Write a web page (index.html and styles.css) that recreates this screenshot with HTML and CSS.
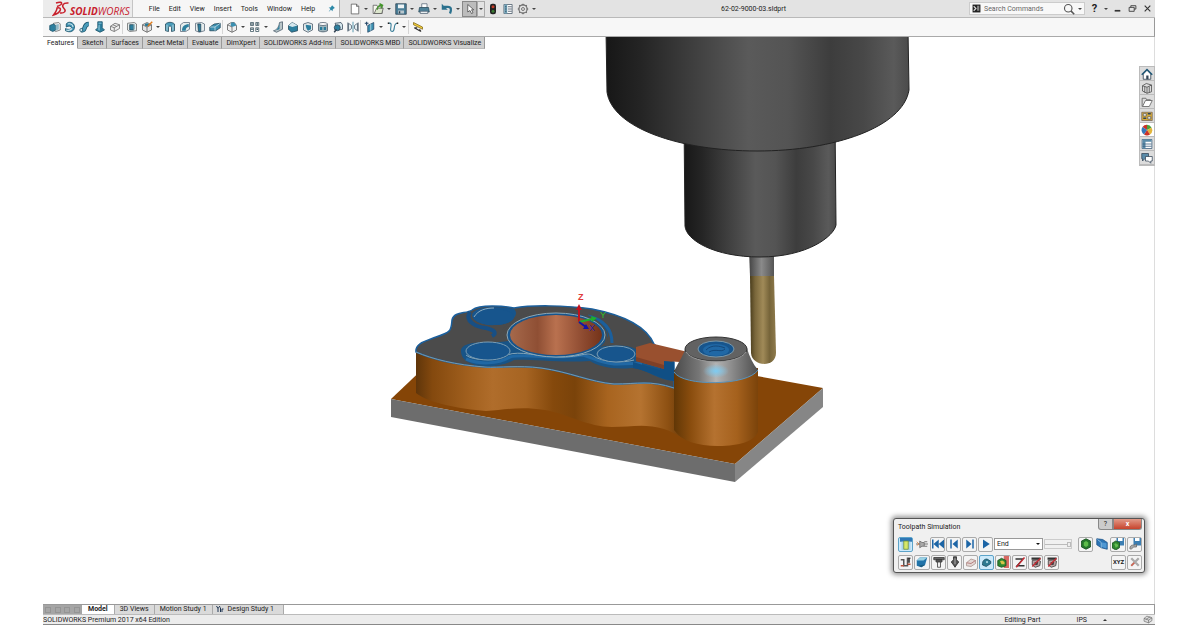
FILE: index.html
```html
<!DOCTYPE html>
<html lang="en">
<head>
  <meta charset="UTF-8">
  <meta name="viewport" content="width=device-width, initial-scale=1.0">
  <title>62-02-9000-03.sldprt</title>
  <link rel="stylesheet" href="styles.css">
</head>
<body>

  <!-- Icon set -->
  <svg class="sprites" aria-hidden="true">
    <symbol id="i-extrude" viewBox="0 0 16 16"><path d="M6 3l7-1 2 2v8l-6 2-3-2z" fill="#eee" stroke="#666"/><path d="M1 6l5-2 3 2v6l-4 2-4-2z" fill="#2d7f9e" stroke="#174f66"/><path d="M9 5l4-1v7l-4 2z" fill="#8fb9c7"/></symbol>
    <symbol id="i-revolve" viewBox="0 0 16 16"><path d="M3 4c2-4 11-3 11 4 0 6-6 8-12 5v-3c4 2 8 1 8-1S6 6 3 8z" fill="#3b8fb0" stroke="#174f66"/><path d="M5 4c4-1 7 1 7 4M3 12c3 1 6 0 8-2" fill="none" stroke="#cfe7ee" stroke-width="1.5"/></symbol>
    <symbol id="i-sweep" viewBox="0 0 16 16"><path d="M3 12c7 2 2-8 10-8" fill="none" stroke="#174f66" stroke-width="6"/><path d="M3 12c7 2 2-8 10-8" fill="none" stroke="#4a9cba" stroke-width="4"/><circle cx="3" cy="12" r="2" fill="#d7edf3" stroke="#174f66"/></symbol>
    <symbol id="i-loft" viewBox="0 0 16 16"><path d="M5 1h6v8l3 3-6 3-6-3 3-3z" fill="#2d7f9e" stroke="#174f66"/><path d="M6 2h4v2H6zM6 5h2v8l-3-1z" fill="#69adc5"/></symbol>
    <symbol id="i-boundary" viewBox="0 0 16 16"><path d="M2 7l6-4 6 2v5l-7 4-5-2z" fill="#eee" stroke="#666"/><path d="M2 7l5 2 7-4M7 9v5M5 5l5 2" fill="none" stroke="#666"/></symbol>
    <symbol id="i-cut" viewBox="0 0 16 16"><path d="M2 3l9-1 3 2v9l-9 1-3-2z" fill="#e7eeee" stroke="#666"/><rect x="5" y="5" width="5" height="7" fill="#2d7f9e" stroke="#245"/><path d="M10 5l2-1v7l-2 1" fill="#91bac5"/></symbol>
    <symbol id="i-hole" viewBox="0 0 16 16"><path d="M2 5l6-3 6 3v7l-6 3-6-3z" fill="#e5e5e5" stroke="#555"/><path d="M2 5l6 3 6-3M8 8v7" fill="none" stroke="#555"/><ellipse cx="8" cy="5" rx="3" ry="2" fill="#277b9a"/><path d="M15 1L9 7" stroke="#e07b19" stroke-width="2"/></symbol>
    <symbol id="i-revcut" viewBox="0 0 16 16"><path d="M2 4c3-3 9-3 12 0v9l-4 1V9c0-3-4-3-4 0v5l-4-1z" fill="#4a9cba" stroke="#245"/><path d="M4 5v8M12 5v8" stroke="#d5e9ee"/></symbol>
    <symbol id="i-sweptcut" viewBox="0 0 16 16"><path d="M2 5l4-3h8v9l-5 3H2z" fill="#e6eded" stroke="#567"/><path d="M4 13c0-6 3-8 9-9v4c-3 0-4 2-4 5z" fill="#2d7f9e"/></symbol>
    <symbol id="i-loftcut" viewBox="0 0 16 16"><path d="M2 3l8-1 4 2v9l-7 2-5-2z" fill="#e6eded" stroke="#567"/><path d="M5 4h4v10H6z" fill="#2d7f9e" stroke="#245"/></symbol>
    <symbol id="i-boundcut" viewBox="0 0 16 16"><path d="M1 8l6-4 8-1v6l-6 4H1z" fill="#3b8fb0" stroke="#245"/><path d="M1 8h7l7-5M8 8v5" fill="none" stroke="#cde3ea"/></symbol>
    <symbol id="i-fillet" viewBox="0 0 16 16"><path d="M2 5l5-3h4l3 4v6l-6 3-6-3z" fill="#f0f0f0" stroke="#555"/><path d="M7 2h4l3 4-6 2-2-2z" fill="#3b8fb0"/><path d="M2 5l6 3v7" fill="none" stroke="#555"/></symbol>
    <symbol id="i-pattern" viewBox="0 0 16 16"><g fill="#fff" stroke="#35505c"><path d="M2 2h4v4H2zM9 2h4v4H9zM2 9h4v5H2zM9 9h4v5H9z"/></g><path d="M3 4h2M10 4h2M3 11h2M10 11h2" stroke="#35505c" stroke-width="2"/></symbol>
    <symbol id="i-rib" viewBox="0 0 16 16"><path d="M10 2l4-1v10l-8 4-4-2c4-1 7-4 8-11z" fill="#b9c5c8" stroke="#456"/><path d="M10 3v8l-7 2c4-1 6-4 7-10z" fill="#2d7f9e"/></symbol>
    <symbol id="i-draft" viewBox="0 0 16 16"><path d="M2 6l5-4 7 4v7l-8 2-4-4z" fill="#2d7f9e" stroke="#245"/><path d="M2 6l5-4 7 4-7 2z" fill="#d6e7ed"/></symbol>
    <symbol id="i-shell" viewBox="0 0 16 16"><path d="M2 4l6-2 6 2v8l-6 3-6-3z" fill="#e2e8ea" stroke="#456"/><path d="M5 5l7 1v5l-4 2c-2-2-3-5-3-8z" fill="#2d7f9e"/></symbol>
    <symbol id="i-wrap" viewBox="0 0 16 16"><path d="M2 4v9c3 2 9 2 12 0V4z" fill="#9fb4bb" stroke="#456"/><ellipse cx="8" cy="4" rx="6" ry="2" fill="#fff" stroke="#456"/><path d="M4 8h3v4H4zM9 8h3v4H9z" fill="#277b9a"/></symbol>
    <symbol id="i-intersect" viewBox="0 0 16 16"><path d="M4 3l8-1 2 3v6l-6 1z" fill="#d6e7ed" stroke="#345"/><circle cx="7" cy="9" r="4" fill="#2d7f9e" stroke="#345"/><path d="M3 15l3-4" stroke="#345" stroke-width="2"/></symbol>
    <symbol id="i-mirror" viewBox="0 0 16 16"><path d="M2 3l4 3v4l-4 3zM14 3l-4 3v4l4 3z" fill="#e4eef1" stroke="#456"/><path d="M8 1v14" stroke="#277b9a"/><path d="M1 2v12M15 2v12" stroke="#456"/></symbol>
    <symbol id="i-refgeo" viewBox="0 0 16 16"><path d="M5 6l8-4v9l-8 4z" fill="#3b8fb0" stroke="#246"/><path d="M9 4v9" stroke="#c8e3eb"/><path d="M1 3h5M3.500 1v5" stroke="#246" stroke-width="1.500"/></symbol>
    <symbol id="i-curve" viewBox="0 0 16 16"><path d="M2 3c8-2-1 11 5 11 5 0 0-11 7-11" fill="none" stroke="#3b7f99" stroke-width="1.500"/><path d="M1 3h2M13 3h2" stroke="#222" stroke-width="2"/></symbol>
    <symbol id="i-instant" viewBox="0 0 16 16"><path d="M2 2l12 6v3L2 5z" fill="#f2ce3b" stroke="#806615"/><path d="M3 9l9 5M3 9h4M12 14l-2-3" fill="none" stroke="#333" stroke-width="1.500"/></symbol>

    <symbol id="i-new" viewBox="0 0 16 16"><path d="M3 1.500h7l3 3v10H3z" fill="#fff" stroke="#555"/><path d="M10 1.500v3h3" fill="none" stroke="#555"/></symbol>
    <symbol id="i-open" viewBox="0 0 16 16"><path d="M1.500 14V3h5l1 2h6v9z" fill="#f7f7ef" stroke="#555"/><path d="M3 14l3-7h9l-2 7z" fill="#dce6cd" stroke="#555"/><path d="M7 9c0-4 3-6 6-6M10 1l4 2-2 4" fill="none" stroke="#45952c" stroke-width="2"/></symbol>
    <symbol id="i-save" viewBox="0 0 16 16"><path d="M1 1h14v14H1z" fill="#4a7f98" stroke="#283e4e"/><path d="M4 2h8v5H4z" fill="#edf3f5"/><path d="M4 10h8v4H4z" fill="#b9c7ce"/><path d="M5 11h2v3H5z" fill="#283e4e"/></symbol>
    <symbol id="i-print" viewBox="0 0 16 16"><path d="M5 1h7v6H5z" fill="#fff" stroke="#567"/><path d="M2 6h12l1 6H1z" fill="#4d8198" stroke="#27485a"/><path d="M3 11h10v3H3z" fill="#e8eef0" stroke="#567"/></symbol>
    <symbol id="i-undo" viewBox="0 0 16 16"><path d="M4 5h5c5 0 5 4 3 9" fill="none" stroke="#2b718e" stroke-width="3"/><path d="M1 1v8h8z" fill="#2b718e"/></symbol>
    <symbol id="i-select" viewBox="0 0 16 16"><path d="M5 2v10l3-2 2 4 2-1-2-4h3z" fill="#fff" stroke="#444"/></symbol>
    <symbol id="i-light" viewBox="0 0 16 16"><rect x="4" y="1" width="8" height="14" rx="3" fill="#222"/><circle cx="8" cy="5" r="2" fill="#c33b28"/><circle cx="8" cy="11" r="2" fill="#3b7b34"/></symbol>
    <symbol id="i-list" viewBox="0 0 16 16"><path d="M2.500 2h11v12h-11z" fill="#fff" stroke="#456"/><path d="M3 2h4v12H3z" fill="#6ea1b6"/><path d="M8 5h5M8 8h5M8 11h5M4 5h2M4 8h2M4 11h2" stroke="#345"/></symbol>
    <symbol id="i-gear" viewBox="0 0 16 16"><circle cx="8" cy="8" r="5.500" fill="none" stroke="#666" stroke-width="1.500"/><circle cx="8" cy="8" r="2" fill="none" stroke="#555"/><path d="M8 1v2M8 13v2M1 8h2M13 8h2M3 3l1 1M12 12l1 1M3 13l1-1M12 4l1-1" stroke="#666" stroke-width="1.500"/></symbol>
    <symbol id="i-pin" viewBox="0 0 16 16"><path d="M9 2l5 5-2 1-2 2v3l-3-3-4 4 3-5-3-3h3l2-2z" fill="#2d89a8"/></symbol>
    <symbol id="i-command" viewBox="0 0 16 16"><path d="M1 1h14v14H1z" fill="#222"/><path d="M3 4l4 4-4 4" fill="none" stroke="#ddd" stroke-width="2"/><path d="M9 3h4v9H9z" fill="#888"/></symbol>
    <symbol id="i-search" viewBox="0 0 16 16"><circle cx="7" cy="7" r="5" fill="none" stroke="#555" stroke-width="1.500"/><path d="M10.500 10.500L15 15" stroke="#555" stroke-width="2"/></symbol>
    <symbol id="i-min" viewBox="0 0 16 16"><path d="M3 12h10" stroke="#333" stroke-width="3"/></symbol>
    <symbol id="i-restore" viewBox="0 0 16 16"><path d="M5 6V3h9v6h-3M2 6h9v7H2z" fill="none" stroke="#333" stroke-width="1.500"/></symbol>
    <symbol id="i-close" viewBox="0 0 16 16"><path d="M3 3l10 10M13 3L3 13" stroke="#333" stroke-width="2"/></symbol>

    <symbol id="i-home" viewBox="0 0 16 16"><path d="M3 8v7h10V8L8 3z" fill="#fff" stroke="#234"/><path d="M1 9l7-7 7 7" fill="none" stroke="#1c5575" stroke-width="2"/><path d="M7 10h3v5H7z" fill="#345"/></symbol>
    <symbol id="i-library" viewBox="0 0 16 16"><path d="M2 5l5-3 7 2v9l-6 2-6-3z" fill="#ddd" stroke="#444"/><path d="M2 5l6 2 6-3M8 7v8M5 6v8M11 6v8" fill="none" stroke="#444"/></symbol>
    <symbol id="i-folder" viewBox="0 0 16 16"><path d="M1.500 14V3h5l1 2h5v2" fill="#ddd" stroke="#555"/><path d="M2 14l4-8h9l-4 8z" fill="#fff" stroke="#555"/></symbol>
    <symbol id="i-palette" viewBox="0 0 16 16"><path d="M1 3h14v11H1z" fill="#d7aa38" stroke="#765"/><path d="M3 5h4v3H3zM9 9h4v3H9z" fill="#fff" stroke="#555"/><path d="M9 5h4M3 11h4" stroke="#345" stroke-width="2"/></symbol>
    <symbol id="i-ball" viewBox="0 0 16 16"><circle cx="8" cy="8" r="7" fill="#eee"/><path d="M8 8V1a7 7 0 0 1 6 4z" fill="#4aa53b"/><path d="M8 8L2 4a7 7 0 0 1 6-3z" fill="#cc3327"/><path d="M8 8l6-3a7 7 0 0 1-2 9z" fill="#e4b63a"/><path d="M8 8l4 6a7 7 0 0 1-8 0z" fill="#cc3327"/><path d="M8 8l-4 6a7 7 0 0 1-2-10z" fill="#3677b9"/></symbol>
    <symbol id="i-props" viewBox="0 0 16 16"><path d="M1.500 2h13v12h-13z" fill="#fff" stroke="#357"/><path d="M2 2h12v3H2zM2 5h4v9H2z" fill="#5b8ca9"/><path d="M2 8h12M2 11h12" stroke="#357"/></symbol>
    <symbol id="i-forum" viewBox="0 0 16 16"><path d="M1 2h9v7H5l-3 3V9H1z" fill="#5b8ca9" stroke="#345"/><path d="M6 6h9v6h-2v3l-3-3H6z" fill="#fff" stroke="#345"/></symbol>

    <symbol id="i-toolview" viewBox="0 0 16 16"><path d="M0 0h16v5H0z" fill="#2f78b6"/><path d="M2 5h12v11H2z" fill="#a5d3ef"/><path d="M5 4h6v11H5z" fill="#d6e86a" stroke="#698b37"/></symbol>
    <symbol id="i-toolarm" viewBox="0 0 16 16"><path d="M0 8h16M11 5h4M11 11h4" stroke="#777" stroke-width="1.500"/><path d="M5 4l3 2h3v5H8l-3 2z" fill="#aaa" stroke="#666"/><path d="M1 5l3 3-3 2" fill="none" stroke="#d37b3b"/></symbol>
    <symbol id="i-first" viewBox="0 0 16 16"><path d="M0 2h2v12H0zM9 2v12L2 8zM16 2v12L9 8z" fill="#1c65a6"/></symbol>
    <symbol id="i-prev" viewBox="0 0 16 16"><path d="M3 2h2v12H3zM13 2v12L6 8z" fill="#1c65a6"/></symbol>
    <symbol id="i-next" viewBox="0 0 16 16"><path d="M11 2h2v12h-2zM3 2l7 6-7 6z" fill="#1c65a6"/></symbol>
    <symbol id="i-play" viewBox="0 0 16 16"><path d="M4 2l9 6-9 6z" fill="#1c65a6"/></symbol>
    <symbol id="i-green" viewBox="0 0 16 16"><path d="M2 4l6-3 6 3v8l-6 3-6-3z" fill="#24772b" stroke="#124a18"/><path d="M5 6l3-2 3 2v4l-3 2-3-2z" fill="#5dbd4a"/></symbol>
    <symbol id="i-bluebox" viewBox="0 0 16 16"><path d="M1 1l8 1 6 4v9l-8-2-6-4z" fill="#2b75b5" stroke="#184f85"/><path d="M2 2l5 4v7" fill="none" stroke="#a8d2ef"/><path d="M8 6l6 1v7l-6-2z" fill="#4f98d3"/></symbol>
    <symbol id="i-greensave" viewBox="0 0 16 16"><path d="M6 0h10v10H6z" fill="#3c7eb2"/><path d="M8 0h6v4H8z" fill="#fff"/><path d="M0 7l5-3 5 2v7l-5 3-5-3z" fill="#2f8731" stroke="#174d1a"/><path d="M3 8l2-1 3 2v2l-3 2z" fill="#65bd50"/></symbol>
    <symbol id="i-partsave" viewBox="0 0 16 16"><path d="M6 0h10v10H6z" fill="#3c7eb2"/><path d="M8 0h6v4H8z" fill="#fff"/><path d="M1 14c1-7 6-3 9-6v4H6l-3 3z" fill="#aaa" stroke="#666"/></symbol>
    <symbol id="i-path" viewBox="0 0 16 16"><path d="M1 5h4v8h5V3h4" fill="none" stroke="#555" stroke-width="2"/><path d="M1 13h4M10 11h4" stroke="#be523b" stroke-width="2"/><path d="M12 3v6" stroke="#222" stroke-width="2"/></symbol>
    <symbol id="i-cube" viewBox="0 0 16 16"><path d="M1 6l4-4h10l-3 10-5 3-6-2z" fill="#2374a9"/><path d="M1 6l4-4h10l-5 4z" fill="#9bd2e3"/><path d="M2 12c4 2 6-1 10 0l-5 3z" fill="#1d5d80"/></symbol>
    <symbol id="i-holder" viewBox="0 0 16 16"><path d="M1 2h14v3H1zM4 5h8v3H4z" fill="#666" stroke="#333"/><path d="M6 8h4v7H6z" fill="#eee" stroke="#333"/></symbol>
    <symbol id="i-drill" viewBox="0 0 16 16"><path d="M6 1h4v4l3 3-3 4-2 3-2-3-3-4 3-3z" fill="#555" stroke="#222"/><path d="M8 3v8" stroke="#ccc"/></symbol>
    <symbol id="i-fixture" viewBox="0 0 16 16"><path d="M2 9l6-5 6 2v4l-6 4-6-1z" fill="#e4d7d4" stroke="#a58d88"/><path d="M2 9l6 1 6-4" fill="none" stroke="#a66"/></symbol>
    <symbol id="i-part" viewBox="0 0 16 16"><path d="M2 10c0-4 3-6 6-6l5 3v3l-6 4-5-2z" fill="#2c7991" stroke="#16475a"/><circle cx="8" cy="8" r="1.500" fill="#a8d6e4"/></symbol>
    <symbol id="i-compare" viewBox="0 0 16 16"><path d="M9 0h7v16H9z" fill="#d76a63"/><path d="M1 6l5-3 6 3v7l-6 2-5-2z" fill="#2f8731" stroke="#174d1a"/><path d="M4 7l3-1 3 2v3H6z" fill="#d8c347"/></symbol>
    <symbol id="i-stop" viewBox="0 0 16 16"><path d="M2 3h11L6 12h8v2H2l8-9H2z" fill="#333"/><path d="M3 15L14 2" stroke="#c22a32" stroke-width="2"/></symbol>
    <symbol id="i-gouge" viewBox="0 0 16 16"><path d="M2 2h12v3H2z" fill="#333"/><path d="M3 6l7-1 4 2-1 6-6 2-4-3z" fill="#b9a2a2" stroke="#333"/><path d="M6 8h5l-1 4H7z" fill="#444"/><path d="M3 14L14 3" stroke="#c22a32" stroke-width="2"/></symbol>
    <symbol id="i-options" viewBox="0 0 16 16"><path d="M3 3l10 10M13 3L3 13" stroke="#aaa" stroke-width="3"/><path d="M3 13l4-4" stroke="#d6604d" stroke-width="2"/></symbol>
    <symbol id="i-study" viewBox="0 0 16 16"><path d="M1 2l3 5v7M8 2L4 7M9 14V5M12 14V8h3" fill="none" stroke="#1f3552" stroke-width="2"/></symbol>
    <symbol id="i-tag" viewBox="0 0 16 16"><path d="M1 6l5-4 9 3v5l-6 4-8-3z" fill="#ddd" stroke="#555"/><path d="M1 6l8 3 6-4M9 9v5M4 8l8-5" fill="none" stroke="#555"/></symbol>
  </svg>

  <div class="window">
    <header class="titlebar">
      <div class="titlebar-menu">
        <div class="logo">
          <svg class="logo-mark" viewBox="0 0 34 32" aria-hidden="true">
            <path d="M8 4c8-3 14-2 10 3-2 2-5 3-8 4" fill="none" stroke="#c8202c" stroke-width="3"/>
            <path d="M10 14c10-3 10 9-7 14 4-5 7-9 7-14z" fill="none" stroke="#c8202c" stroke-width="3"/>
            <path d="M33 4c-12-1-14 6-9 11 5 5 1 10-8 9" fill="none" stroke="#c8202c" stroke-width="3"/>
          </svg>
          <span class="logo-text"><b>SOLID</b>WORKS</span>
        </div>
        <nav class="menu">
          <a href="#">File</a>
          <a href="#">Edit</a>
          <a href="#">View</a>
          <a href="#">Insert</a>
          <a href="#">Tools</a>
          <a href="#">Window</a>
          <a href="#">Help</a>
        </nav>
        <button class="tool pin" aria-label="Pin menu"><svg><use href="#i-pin"/></svg></button>
      </div>
      <div class="quick">
        <button class="tool" aria-label="New"><svg><use href="#i-new"/></svg></button><button class="drop" aria-label="New options"></button>
        <button class="tool" aria-label="Open"><svg><use href="#i-open"/></svg></button><button class="drop" aria-label="Open options"></button>
        <button class="tool" aria-label="Save"><svg><use href="#i-save"/></svg></button><button class="drop" aria-label="Save options"></button>
        <button class="tool" aria-label="Print"><svg><use href="#i-print"/></svg></button><button class="drop" aria-label="Print options"></button>
        <button class="tool" aria-label="Undo"><svg><use href="#i-undo"/></svg></button><button class="drop" aria-label="Undo options"></button>
        <button class="tool tool-on" aria-label="Select"><svg><use href="#i-select"/></svg></button><button class="drop drop-on" aria-label="Select options"></button>
        <button class="tool" aria-label="Rebuild"><svg><use href="#i-light"/></svg></button>
        <button class="tool" aria-label="File properties"><svg><use href="#i-list"/></svg></button>
        <button class="tool" aria-label="Options"><svg><use href="#i-gear"/></svg></button><button class="drop" aria-label="More options"></button>
      </div>
      <div class="doc-title">62-02-9000-03.sldprt</div>
      <form class="search">
        <svg class="search-icon"><use href="#i-command"/></svg>
        <input class="search-input" type="text" placeholder="Search Commands" aria-label="Search Commands">
        <button class="tool" type="button" aria-label="Search"><svg><use href="#i-search"/></svg></button><button class="drop" type="button" aria-label="Search options"></button>
      </form>
      <div class="window-buttons">
        <button class="tool help">?</button><button class="drop" aria-label="Help options"></button>
        <button class="tool" aria-label="Minimize"><svg><use href="#i-min"/></svg></button>
        <button class="tool" aria-label="Restore"><svg><use href="#i-restore"/></svg></button>
        <button class="tool" aria-label="Close"><svg><use href="#i-close"/></svg></button>
      </div>
    </header>

    <div class="features">
      <button class="tool" aria-label="Extruded Boss"><svg><use href="#i-extrude"/></svg></button>
      <button class="tool" aria-label="Revolved Boss"><svg><use href="#i-revolve"/></svg></button>
      <button class="tool" aria-label="Swept Boss"><svg><use href="#i-sweep"/></svg></button>
      <button class="tool" aria-label="Lofted Boss"><svg><use href="#i-loft"/></svg></button>
      <button class="tool" aria-label="Boundary Boss"><svg><use href="#i-boundary"/></svg></button>
      <span class="sep"></span>
      <button class="tool" aria-label="Extruded Cut"><svg><use href="#i-cut"/></svg></button>
      <button class="tool" aria-label="Hole Wizard"><svg><use href="#i-hole"/></svg></button><button class="drop" aria-label="Hole options"></button>
      <button class="tool" aria-label="Revolved Cut"><svg><use href="#i-revcut"/></svg></button>
      <button class="tool" aria-label="Swept Cut"><svg><use href="#i-sweptcut"/></svg></button>
      <button class="tool" aria-label="Lofted Cut"><svg><use href="#i-loftcut"/></svg></button>
      <button class="tool" aria-label="Boundary Cut"><svg><use href="#i-boundcut"/></svg></button>
      <span class="sep"></span>
      <button class="tool" aria-label="Fillet"><svg><use href="#i-fillet"/></svg></button><button class="drop" aria-label="Fillet options"></button>
      <button class="tool" aria-label="Pattern"><svg><use href="#i-pattern"/></svg></button><button class="drop" aria-label="Pattern options"></button>
      <button class="tool" aria-label="Rib"><svg><use href="#i-rib"/></svg></button>
      <button class="tool" aria-label="Draft"><svg><use href="#i-draft"/></svg></button>
      <button class="tool" aria-label="Shell"><svg><use href="#i-shell"/></svg></button>
      <button class="tool" aria-label="Wrap"><svg><use href="#i-wrap"/></svg></button>
      <button class="tool" aria-label="Intersect"><svg><use href="#i-intersect"/></svg></button>
      <button class="tool" aria-label="Mirror"><svg><use href="#i-mirror"/></svg></button>
      <span class="sep"></span>
      <button class="tool" aria-label="Reference Geometry"><svg><use href="#i-refgeo"/></svg></button><button class="drop" aria-label="Geometry options"></button>
      <button class="tool" aria-label="Curves"><svg><use href="#i-curve"/></svg></button><button class="drop" aria-label="Curve options"></button>
      <span class="sep"></span>
      <button class="tool" aria-label="Instant3D"><svg><use href="#i-instant"/></svg></button>
    </div>

    <main class="viewport">
      <svg class="scene" viewBox="43 37 1112 567" preserveAspectRatio="xMidYMin slice" role="img" aria-label="Machined part with milling tool">
        <defs>
          <linearGradient id="g-spindle">
            <stop offset="0" stop-color="#171717"/><stop offset=".12" stop-color="#252525"/><stop offset=".27" stop-color="#3c3c3c"/><stop offset=".47" stop-color="#5a5a5a"/><stop offset=".6" stop-color="#545454"/><stop offset=".74" stop-color="#3d3d3d"/><stop offset=".85" stop-color="#484848"/><stop offset=".95" stop-color="#5a5a5a"/><stop offset="1" stop-color="#4b4b4b"/>
          </linearGradient>
          <linearGradient id="g-shank">
            <stop offset="0" stop-color="#444"/><stop offset=".5" stop-color="#8a8a8a"/><stop offset="1" stop-color="#555"/>
          </linearGradient>
          <linearGradient id="g-tool">
            <stop offset="0" stop-color="#4a3d1c"/><stop offset=".2" stop-color="#7a673b"/><stop offset=".5" stop-color="#a08a58"/><stop offset=".75" stop-color="#77653a"/><stop offset="1" stop-color="#8f7b4c"/>
          </linearGradient>
          <linearGradient id="g-body">
            <stop offset="0" stop-color="#5f350a"/><stop offset=".06" stop-color="#84490e"/><stop offset=".2" stop-color="#a3611f"/><stop offset=".28" stop-color="#b06d2b"/><stop offset=".4" stop-color="#a66422"/><stop offset=".5" stop-color="#85490c"/><stop offset=".58" stop-color="#7a430a"/><stop offset=".7" stop-color="#a8641f"/><stop offset=".82" stop-color="#b57330"/><stop offset=".92" stop-color="#8d5012"/><stop offset="1" stop-color="#5a3207"/>
          </linearGradient>
          <linearGradient id="g-boss">
            <stop offset="0" stop-color="#613706"/><stop offset=".2" stop-color="#8a4d0e"/><stop offset=".48" stop-color="#b57230"/><stop offset=".75" stop-color="#a5611d"/><stop offset="1" stop-color="#7b430a"/>
          </linearGradient>
          <linearGradient id="g-cone">
            <stop offset="0" stop-color="#4a4a4a"/><stop offset=".3" stop-color="#777"/><stop offset=".5" stop-color="#b4b4b4"/><stop offset=".72" stop-color="#858585"/><stop offset="1" stop-color="#4d4d4d"/>
          </linearGradient>
          <linearGradient id="g-hole">
            <stop offset="0" stop-color="#a6694b"/><stop offset=".3" stop-color="#8f4f34"/><stop offset=".5" stop-color="#b9714f"/><stop offset=".8" stop-color="#8d4a30"/><stop offset="1" stop-color="#743319"/>
          </linearGradient>
          <radialGradient id="g-glow">
            <stop offset="0" stop-color="#7dcbf2"/><stop offset="1" stop-color="#7dcbf2" stop-opacity="0"/>
          </radialGradient>
        </defs>

        <!-- Stock plate -->
        <path d="M391 399L430 362L757 376L823 388L735 464z" fill="#854507"/>
        <path d="M391 399L735 464V482L391 417z" fill="#6d6d6d"/>
        <path d="M735 464L823 388V407L735 482z" fill="#868686"/>

        <!-- Part walls -->
        <path d="M416 350V393C428 403 460 409 486 411C505 410 520 406 545 410C568 414 588 427 612 427C630 427 645 423 664 429C676 433 682 438 690 441V385z" fill="url(#g-body)"/>

        <!-- Part top face -->
        <path d="M416 352C415 343 426 341 436 337C452 332 451 330 452 320C454 311 466 314 472 310C480 304 504 306 514 308C530 305 565 305 592 309C628 316 647 328 654 344L674 362V388C650 380 638 384 614 384C590 382 570 372 541 368C518 365 500 368 485 367C456 365 432 359 416 352z" fill="#4b4b4b" stroke="#1b5f9c" stroke-width="1.500"/>
        <path d="M416 352C432 359 456 365 485 367C500 368 518 365 541 368C570 372 590 382 614 384C638 384 650 380 674 388" fill="none" stroke="#7799ac"/>

        <!-- Pockets and ribs -->
        <path d="M470 312C464 321 476 327 486 328C494 330 498 333 492 336" fill="none" stroke="#174f85" stroke-width="4"/>
        <path d="M472 315C474 305 504 307 514 309C520 314 512 325 496 325C482 326 472 321 472 315z" fill="#17558d"/>
        <path d="M461 351C461 343 476 342 492 342C500 342 506 342 510 340C515 320 535 313 560 313C590 313 608 320 608 336C606 342 602 345 600 347C618 344 634 346 638 351L674 363V381C654 379 648 369 632 368C612 370 598 366 590 361C560 363 530 359 514 360C504 366 484 369 470 363C463 360 461 355 461 351z" fill="#185487"/>
        <path d="M466 359C480 365 498 364 510 357C522 353 555 360 582 355C590 356 598 363 614 364C624 364 634 363 642 364" fill="none" stroke="#2068a5" stroke-width="3"/>
        <path d="M466 355C472 361 496 361 507 355C520 350 538 357 562 357C580 357 586 352 592 355C602 363 624 363 634 360" fill="none" stroke="#82a4b8"/>
        <path d="M588 316C604 320 612 329 612 343" fill="none" stroke="#1b5f9c" stroke-width="3"/>
        <path d="M501 338C502 322 525 311 557 311C585 311 610 322 606 342" fill="none" stroke="#4b4b4b" stroke-width="2"/>
        <ellipse cx="488" cy="351" rx="22" ry="9" fill="#17558d" stroke="#7c9eb4"/>
        <ellipse cx="494" cy="317" rx="20" ry="8" fill="#17558d"/>
        <path d="M474 317C478 310 486 308 494 308" fill="none" stroke="#8fadc0"/>
        <ellipse cx="616" cy="354" rx="19" ry="8" fill="#17558d" stroke="#7c9eb4"/>
        <ellipse cx="556" cy="335" rx="49" ry="22" fill="#17558d" stroke="#8ea8b5"/>
        <ellipse cx="556" cy="335" rx="46" ry="20" fill="url(#g-hole)"/>

        <!-- Slot -->
        <path d="M633 362L660 370V361L674 362V381C656 378 650 371 633 368z" fill="#104f85"/>
        <path d="M636 347L650 343L688 352L680 362L664 361V369L636 361z" fill="#99502f"/>
        <path d="M636 357L664 365V369L636 361z" fill="#7f4027"/>

        <!-- Boss -->
        <path d="M674 370V430C682 441 697 446 718 446C740 446 754 441 758 432V368z" fill="url(#g-boss)"/>
        <path d="M685 349C683 357 677 364 674 372C683 387 748 386 758 370C753 364 749 356 747 348z" fill="url(#g-cone)"/>
        <path d="M674 372C683 387 748 386 758 370" fill="none" stroke="#5793bd"/>
        <ellipse cx="716" cy="371" rx="13" ry="7" fill="url(#g-glow)"/>
        <ellipse cx="716" cy="349" rx="31" ry="12" fill="#626262" stroke="#333"/>
        <path d="M686 352C694 365 738 365 746 352" fill="none" stroke="#999"/>
        <ellipse cx="716" cy="349" rx="18" ry="8" fill="#17558d" stroke="#7c98a8"/>
        <ellipse cx="716" cy="350" rx="13" ry="6" fill="#2068a5"/>
        <path d="M706 350C712 344 720 346 725 348M709 352C716 348 721 353 725 349" fill="none" stroke="#14487a"/>

        <!-- Tool and spindle -->
        <path d="M750 276H774L776 353C776 368 752 367 751 353z" fill="url(#g-tool)"/>
        <path d="M749 250H774V276H750z" fill="url(#g-shank)"/>
        <path d="M684 120H835L836 225C834 236 808 257 760 257C714 257 686 240 685 226z" fill="url(#g-spindle)" stroke="#222"/>
        <path d="M606 30H908L909 90C903 127 835 151 757 151C680 151 612 128 607 92z" fill="url(#g-spindle)" stroke="#222"/>

        <!-- Origin -->
        <path d="M579 322V308" stroke="#c1121f" stroke-width="2"/><path d="M579 304L582 310H576z" fill="#c1121f"/>
        <path d="M579 322L592 319" stroke="#1fae2c" stroke-width="2"/><path d="M597 318L591 316L592 322z" fill="#1fae2c"/>
        <path d="M579 322L586 327" stroke="#1414a8" stroke-width="2"/><path d="M589 329L586 324L583 329z" fill="#1414a8"/>
        <text class="axis axis-z" x="578" y="300">Z</text>
        <text class="axis axis-y" x="600" y="318">Y</text>
        <text class="axis axis-x" x="589" y="331">X</text>
      </svg>

      <nav class="tabs">
        <a href="#" class="tab tab-active">Features</a>
        <a href="#" class="tab">Sketch</a>
        <a href="#" class="tab">Surfaces</a>
        <a href="#" class="tab">Sheet Metal</a>
        <a href="#" class="tab">Evaluate</a>
        <a href="#" class="tab">DimXpert</a>
        <a href="#" class="tab">SOLIDWORKS Add-Ins</a>
        <a href="#" class="tab">SOLIDWORKS MBD</a>
        <a href="#" class="tab">SOLIDWORKS Visualize</a>
      </nav>

      <aside class="taskpane">
        <button class="task" aria-label="Home"><svg><use href="#i-home"/></svg></button>
        <button class="task" aria-label="Design Library"><svg><use href="#i-library"/></svg></button>
        <button class="task" aria-label="File Explorer"><svg><use href="#i-folder"/></svg></button>
        <button class="task" aria-label="View Palette"><svg><use href="#i-palette"/></svg></button>
        <button class="task task-on" aria-label="Appearances"><svg><use href="#i-ball"/></svg></button>
        <button class="task" aria-label="Custom Properties"><svg><use href="#i-props"/></svg></button>
        <button class="task" aria-label="Forum"><svg><use href="#i-forum"/></svg></button>
      </aside>

      <section class="dialog" aria-label="Toolpath Simulation">
        <div class="dialog-head">
          <span class="dialog-title">Toolpath Simulation</span>
          <button class="dialog-help" aria-label="Help">?</button>
          <button class="dialog-close" aria-label="Close">x</button>
        </div>
        <div class="dialog-row">
          <button class="sim sim-on" aria-label="Tool view"><svg><use href="#i-toolview"/></svg></button>
          <button class="sim sim-flat" aria-label="Tool mode"><svg><use href="#i-toolarm"/></svg></button>
          <button class="sim" aria-label="To start"><svg><use href="#i-first"/></svg></button>
          <button class="sim" aria-label="Step back"><svg><use href="#i-prev"/></svg></button>
          <button class="sim" aria-label="Step forward"><svg><use href="#i-next"/></svg></button>
          <button class="sim" aria-label="Run"><svg><use href="#i-play"/></svg></button>
          <span class="sim-pick">
            <select class="sim-select" aria-label="Run until"><option>End</option></select>
          </span>
          <input class="sim-speed" type="range" value="100" aria-label="Speed">
          <button class="sim sim-push" aria-label="Show stock"><svg><use href="#i-green"/></svg></button>
          <button class="sim sim-flat" aria-label="Section"><svg><use href="#i-bluebox"/></svg></button>
          <button class="sim sim-wide" aria-label="Save stock"><svg><use href="#i-greensave"/></svg></button>
          <button class="sim" aria-label="Save part"><svg><use href="#i-partsave"/></svg></button>
        </div>
        <div class="dialog-row">
          <button class="sim" aria-label="Toolpath"><svg><use href="#i-path"/></svg></button>
          <button class="sim sim-wide" aria-label="Stock"><svg><use href="#i-cube"/></svg></button>
          <button class="sim" aria-label="Holder"><svg><use href="#i-holder"/></svg></button>
          <button class="sim" aria-label="Cutter"><svg><use href="#i-drill"/></svg></button>
          <button class="sim" aria-label="Fixture"><svg><use href="#i-fixture"/></svg></button>
          <button class="sim sim-on" aria-label="Target part"><svg><use href="#i-part"/></svg></button>
          <button class="sim sim-wide" aria-label="Compare"><svg><use href="#i-compare"/></svg></button>
          <button class="sim" aria-label="Stop on collision"><svg><use href="#i-stop"/></svg></button>
          <button class="sim" aria-label="Stop on gouge"><svg><use href="#i-gouge"/></svg></button>
          <button class="sim" aria-label="Stop on holder"><svg><use href="#i-gouge"/></svg></button>
          <button class="sim sim-push sim-xyz">XYZ</button>
          <button class="sim" aria-label="Options"><svg><use href="#i-options"/></svg></button>
        </div>
      </section>
    </main>

    <nav class="sheets">
      <span class="sheet-nav"><i></i><i></i><i></i><i></i></span>
      <a href="#" class="sheet sheet-active">Model</a>
      <a href="#" class="sheet">3D Views</a>
      <a href="#" class="sheet">Motion Study 1</a>
      <a href="#" class="sheet sheet-study"><svg><use href="#i-study"/></svg>Design Study 1</a>
    </nav>

    <footer class="status">
      <span class="status-name">SOLIDWORKS Premium 2017 x64 Edition</span>
      <span class="status-mode">Editing Part</span>
      <span>IPS</span>
      <span class="status-up"></span>
      <svg class="status-tag"><use href="#i-tag"/></svg>
    </footer>
  </div>

</body>
</html>
```
FILE: styles.css
```css
* {
  box-sizing: border-box;
}
body {
  margin: 0;
  background: #fff;
  color: #222;
  font-family: Roboto, "Open Sans", sans-serif;
  font-size: 7px;
  line-height: 10px;
}
a {
  color: inherit;
  text-decoration: none;
}
button, input, select {
  margin: 0;
  padding: 0;
  border: 0;
  background: none;
  color: inherit;
  font: inherit;
}
.sprites {
  display: none;
}
.window {
  display: flex;
  flex-direction: column;
  height: 100vh;
  margin: 0 45px 0 43px;
}

/* Title bar */
.titlebar {
  display: flex;
  align-items: stretch;
  height: 18px;
  background: #e3e3e3;
  border-bottom: 1px solid #b9b9b9;
}
.titlebar-menu {
  display: flex;
  align-items: center;
  background: #f6f6f6;
  border-right: 1px solid #b5b5b5;
}
.logo {
  display: flex;
  align-items: center;
  align-self: stretch;
  gap: 1px;
  padding: 0 2px 0 9px;
  background: #ececec;
  border-right: 1px solid #c5c5c5;
  color: #c8202c;
}
.logo-mark {
  width: 17px;
  height: 16px;
}
.logo-text {
  padding-top: 4px;
  font-family: "Open Sans", sans-serif;
  font-size: 10px;
  font-style: italic;
}
.menu {
  display: flex;
  gap: 9px;
  padding: 1px 9px 0 16px;
}
.tool {
  display: flex;
  flex: none;
  align-items: center;
  justify-content: center;
  width: 15px;
  height: 16px;
}
.tool svg {
  width: 12px;
  height: 12px;
}
.pin svg {
  width: 9px;
  height: 9px;
}
.tool-on {
  background: #bcbcbc;
  border: 1px solid #888;
}
.drop {
  flex: none;
  width: 8px;
  height: 16px;
}
.drop::before {
  content: "";
  display: block;
  width: 0;
  margin: 0 auto;
  border: 2px solid transparent;
  border-top-color: #444;
  border-bottom: 0;
}
.drop-on {
  border: 1px solid #aaa;
}
.quick {
  display: flex;
  align-items: center;
  padding-left: 7px;
}
.doc-title {
  flex: 1;
  align-self: center;
  padding-top: 1px;
  text-align: center;
}
.search {
  display: flex;
  align-items: center;
  align-self: center;
  width: 116px;
  height: 13px;
  padding-left: 2px;
  background: #f8f8f8;
  border: 1px solid #ccc;
}
.search-icon {
  flex: none;
  width: 9px;
  height: 9px;
}
.search-input {
  flex: 1;
  min-width: 0;
  margin-left: 3px;
}
.search-input::placeholder {
  color: #666;
}
.window-buttons {
  display: flex;
  align-items: center;
  padding-left: 2px;
}
.window-buttons svg {
  width: 9px;
  height: 9px;
}
.help {
  font-size: 11px;
  font-weight: bold;
}

/* Features toolbar */
.features {
  display: flex;
  align-items: center;
  height: 19px;
  padding-left: 4px;
  background: #f7f7f7;
  border-right: 1px solid #999;
  border-bottom: 1px solid #a9a9a9;
}
.sep {
  width: 1px;
  height: 14px;
  margin-right: 1px;
  background: #d5d5d5;
}

/* Graphics area: everything shares one grid cell */
.viewport {
  display: grid;
  flex: 1;
  min-height: 0;
  box-shadow: inset -1px 0 #ddd;
}
.viewport > * {
  grid-area: 1 / 1;
}
.scene {
  width: 100%;
  height: 100%;
  min-height: 0;
}
.axis {
  font-family: "Liberation Sans", Arial, sans-serif;
  font-size: 9px;
}
.axis-z {
  fill: #e03a3a;
  font-weight: bold;
}
.axis-y {
  fill: #2bc02b;
}
.axis-x {
  fill: #2a22a8;
}
.tabs {
  display: flex;
  align-self: start;
  justify-self: start;
}
.tab {
  height: 12px;
  padding: 1px 3px 0 4px;
  background: #d0d0d0;
  border-right: 1px solid #999;
  border-bottom: 1px solid #bbb;
}
.tab-active {
  background: #fff;
  border-bottom-color: #fff;
}
.taskpane {
  align-self: start;
  justify-self: end;
  margin-top: 29px;
  border: 1px solid #bbb;
}
.task {
  display: flex;
  align-items: center;
  justify-content: center;
  width: 14px;
  height: 14px;
  background: #dcdcdc;
  border-bottom: 1px solid #bbb;
}
.task svg {
  width: 12px;
  height: 12px;
}
.task-on {
  background: #fff;
}

/* Toolpath Simulation */
.dialog {
  align-self: end;
  justify-self: end;
  width: 252px;
  margin: 0 10px 31px 0;
  padding: 0 2px 1px 4px;
  background: #f0f0f0;
  border: 1px solid #555;
  border-radius: 3px;
  box-shadow: 0 0 5px 2px #999;
}
.dialog-head {
  display: flex;
  align-items: flex-start;
  height: 16px;
}
.dialog-title {
  flex: 1;
  padding-top: 3px;
}
.dialog-help, .dialog-close {
  width: 15px;
  height: 11px;
  border: 1px solid #888;
  border-top: 0;
  background: #ccc;
  line-height: 8px;
}
.dialog-help {
  border-radius: 0 0 0 3px;
}
.dialog-close {
  width: 29px;
  background: linear-gradient(#e29a88, #c7432c);
  border-radius: 0 0 3px 0;
  color: #fff;
  font-weight: bold;
}
.dialog-row {
  display: flex;
  align-items: center;
  gap: 1px;
  height: 18px;
}
.sim {
  display: flex;
  flex: none;
  align-items: center;
  justify-content: center;
  width: 15px;
  height: 15px;
  background: #f4f4f4;
  border: 1px solid #aaa;
  border-radius: 2px;
}
.sim svg {
  width: 12px;
  height: 12px;
}
.sim-on {
  background: #cdeafb;
  border-color: #5ca3c9;
}
.sim-flat {
  border-color: transparent;
  background: none;
}
.sim-wide {
  width: 16px;
}
.sim-push {
  margin-left: auto;
}
.sim-xyz {
  font-size: 6px;
  font-weight: bold;
}
.sim-pick {
  display: grid;
  align-items: center;
}
.sim-pick::after {
  content: "";
  grid-area: 1 / 1;
  justify-self: end;
  margin-right: 3px;
  border: 2px solid transparent;
  border-top-color: #111;
  border-bottom: 0;
  pointer-events: none;
}
.sim-select {
  grid-area: 1 / 1;
  width: 49px;
  height: 12px;
  padding-left: 2px;
  appearance: none;
  background: #fff;
  border: 1px solid #999;
}
.sim-speed {
  width: 28px;
  height: 10px;
  appearance: none;
  border: 1px solid #ccc;
}
.sim-speed::-webkit-slider-runnable-track {
  height: 1px;
  background: #bbb;
}
.sim-speed::-webkit-slider-thumb {
  appearance: none;
  width: 4px;
  height: 5px;
  margin-top: -2px;
  background: #eee;
  border: 1px solid #bbb;
}

/* Sheet tabs and status bar */
.sheets {
  display: flex;
  height: 10px;
  border: 1px solid #999;
  border-left: 0;
  border-bottom: 0;
  line-height: 8px;
}
.sheet-nav {
  display: flex;
  align-items: center;
  justify-content: space-around;
  width: 39px;
  background: #a5a5a5;
}
.sheet-nav i {
  width: 6px;
  height: 6px;
  border: 1px solid #949494;
}
.sheet {
  display: flex;
  align-items: flex-start;
  gap: 4px;
  padding: 0 5px;
  background: #dadada;
  border-right: 1px solid #aaa;
}
.sheet svg {
  width: 8px;
  height: 8px;
}
.sheet-active {
  padding: 0 6px;
  background: #fff;
  font-weight: bold;
}
.sheet-study {
  padding: 0 9px 0 3px;
}
.status {
  display: flex;
  align-items: center;
  height: 11px;
  padding-right: 2px;
  background: #ececec;
  border-top: 1px solid #bbb;
  border-bottom: 1px solid #888;
}
.status-name {
  flex: 1;
}
.status-mode {
  margin-right: 36px;
}
.status-up {
  width: 0;
  margin: 0 36px 0 16px;
  border: 2px solid transparent;
  border-top: 0;
  border-bottom-color: #333;
}
.status-tag {
  width: 10px;
  height: 9px;
}
```
